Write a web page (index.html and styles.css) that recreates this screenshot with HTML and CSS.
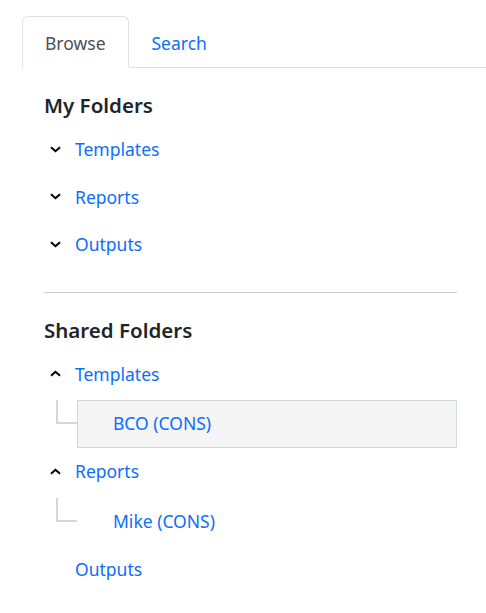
FILE: index.html
```html
<!DOCTYPE html>
<html lang="en">
<head>
<meta charset="utf-8">
<title>Folders</title>
<link rel="stylesheet" href="styles.css">
</head>
<body>
<div class="tabs">
  <div class="tab active">Browse</div>
  <div class="tab">Search</div>
</div>
<div class="pane">
  <h2 class="heading">My Folders</h2>
  <div class="row"><span class="chev"><svg width="11" height="7" viewBox="0 0 11 7"><path d="M1 1.2 L5.5 5.2 L10 1.2" fill="none" stroke="#000" stroke-width="2"/></svg></span><a class="link">Templates</a></div>
  <div class="row"><span class="chev"><svg width="11" height="7" viewBox="0 0 11 7"><path d="M1 1.2 L5.5 5.2 L10 1.2" fill="none" stroke="#000" stroke-width="2"/></svg></span><a class="link">Reports</a></div>
  <div class="row"><span class="chev"><svg width="11" height="7" viewBox="0 0 11 7"><path d="M1 1.2 L5.5 5.2 L10 1.2" fill="none" stroke="#000" stroke-width="2"/></svg></span><a class="link">Outputs</a></div>
  <hr class="divider">
  <h2 class="heading">Shared Folders</h2>
  <div class="row"><span class="chev"><svg width="11" height="7" viewBox="0 0 11 7"><path d="M1 5.8 L5.5 1.8 L10 5.8" fill="none" stroke="#000" stroke-width="2"/></svg></span><a class="link">Templates</a></div>
  <div class="child">
    <span class="connector"></span>
    <div class="child-item selected"><a class="link">BCO (CONS)</a></div>
  </div>
  <div class="row"><span class="chev"><svg width="11" height="7" viewBox="0 0 11 7"><path d="M1 5.8 L5.5 1.8 L10 5.8" fill="none" stroke="#000" stroke-width="2"/></svg></span><a class="link">Reports</a></div>
  <div class="child">
    <span class="connector"></span>
    <div class="child-item"><a class="link">Mike (CONS)</a></div>
  </div>
  <div class="row"><span class="chev"></span><a class="link">Outputs</a></div>
</div>
</body>
</html>
```
FILE: styles.css
```css
* { box-sizing: border-box; }
html, body { margin: 0; padding: 0; background: #fff; }
body {
  font-family: "Segoe UI", "Noto Sans", "Open Sans", sans-serif;
  font-size: 17.5px;
  color: #212529;
}
.tabs {
  display: flex;
  margin: 16px 0 0 22px;
  border-bottom: 1px solid #dee2e6;
}
.tab {
  height: 52px;
  line-height: 52px;
  padding: 0 22px;
  color: #0d6efd;
  border: 1px solid transparent;
  border-radius: 6px 6px 0 0;
  margin-bottom: -1px;
}
.tab.active {
  color: #495057;
  border-color: #dee2e6 #dee2e6 #fff;
  background: #fff;
}
.pane {
  padding: 16px 29px 0 44px;
}
.heading {
  margin: 0;
  height: 41px;
  line-height: 42px;
  font-size: 20.5px;
  font-weight: 600;
  color: #212529;
}
.row {
  display: flex;
  align-items: center;
  height: 47.5px;
  padding-top: 1px;
}
.chev {
  width: 31px;
  flex: none;
  display: flex;
  align-items: center;
  padding-left: 6px;
}
.chev svg { display: block; }
.link {
  color: #0d6efd;
  text-decoration: none;
}
.divider {
  margin: 24px 0 16px;
  border: 0;
  border-top: 1px solid #ccc;
  height: 0;
}
.child {
  display: flex;
  margin: 3px 0 -1px;
  height: 48px;
}
.connector {
  flex: none;
  width: 21px;
  height: 24px;
  margin-left: 12px;
  border-left: 2px solid #d3d6db;
  border-bottom: 2px solid #d3d6db;
}
.child-item {
  flex: 1;
  display: flex;
  align-items: center;
  padding: 0 0 2px 35px;
  border: 1px solid transparent;
}
.child-item.selected {
  background: #f5f5f5;
  border-color: #d3d6db;
}
```
